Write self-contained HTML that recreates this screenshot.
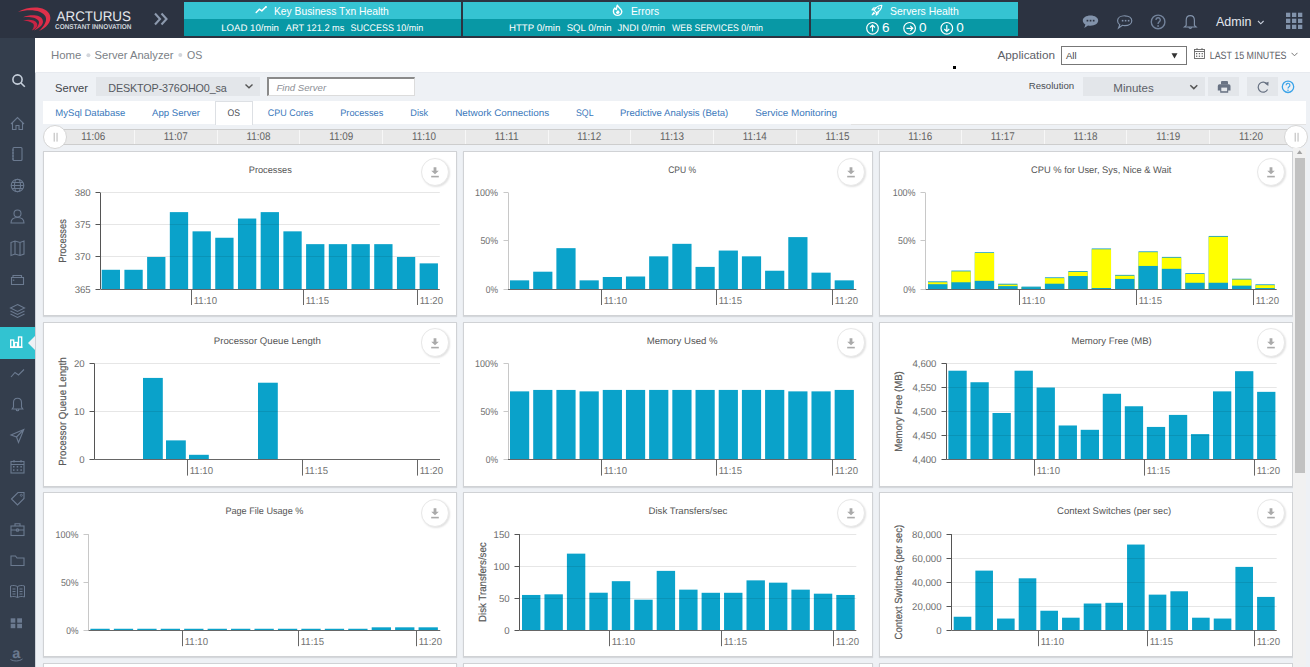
<!DOCTYPE html><html><head><meta charset="utf-8"><style>
*{box-sizing:border-box;margin:0;padding:0}
html,body{width:1310px;height:667px;overflow:hidden;background:#eef1f5;font-family:"Liberation Sans", sans-serif;}
.a{position:absolute;white-space:nowrap}
svg text{text-rendering:geometricPrecision}
</style></head><body><div class="a" style="left:0;top:0;width:1310px;height:38px;background:#2c3341"></div>
<svg class="a" style="left:14px;top:2px" width="40" height="32" viewBox="14 2 40 32">
<path d="M18 11.8 C 30 5.5, 47 6, 50 15.5 C 52 22, 46 28, 39 31 C 44 26, 47.5 21, 45.5 16.5 C 42 10, 30 8.8, 18 11.8 Z" fill="#e0304a"/>
<path d="M23 17.3 C 31 14, 40.5 15, 42.5 19.5 C 44.5 24, 40 28, 34 30.5 C 38 27, 40 23, 38.5 20.8 C 35.5 17, 29 16.8, 23 17.3 Z" fill="#d82a48"/>
<path d="M23 20.6 C 29 19, 35 20, 36.8 23 C 38.5 26, 36 28.5, 32 30.5 C 34 27.5, 34.5 25, 33 23.5 C 30.5 21.5, 26 21, 23 20.6 Z" fill="#c82444"/>
</svg>
<svg class="a" style="left:50px;top:0" width="130" height="38" viewBox="50 0 130 38"><text x="56.5" y="20.6" font-size="13.9" font-family="Liberation Sans" fill="#e6e9ee" textLength="74.5" lengthAdjust="spacingAndGlyphs">ARCTURUS</text><text x="55" y="29.3" font-size="7.1" font-weight="bold" font-family="Liberation Sans" fill="#cfd3da" textLength="76.5" lengthAdjust="spacingAndGlyphs">CONSTANT INNOVATION</text><path d="M155 13.5 L160 19 L155 24.5 M161.5 13.5 L166.5 19 L161.5 24.5" stroke="#8d9aae" stroke-width="2.1" fill="none"/></svg>
<div class="a" style="left:184px;top:2px;width:277px;height:17px;background:#35c3d2"></div>
<div class="a" style="left:184px;top:19px;width:277px;height:17px;background:#0898a5"></div>
<div class="a" style="left:274px;top:4.5px;font-size:10.3px;color:#fff;line-height:14px">Key Business Txn Health</div>
<svg class="a" style="left:255px;top:5px" width="13" height="9" viewBox="0 0 13 9"><path d="M1.2 7.4 L4.3 4.2 L6.8 5.9 L10.8 2" stroke="#fff" stroke-width="1.5" stroke-linecap="round" stroke-linejoin="round" fill="none"/><circle cx="11" cy="1.9" r="0.9" fill="#fff"/></svg>
<svg class="a" style="left:0;top:18px" width="1310" height="20" viewBox="0 18 1310 20"><text x="221.2" y="31.1" font-size="9.5" fill="#fff" font-family="Liberation Sans" textLength="57.7" lengthAdjust="spacingAndGlyphs">LOAD 10/min</text><text x="285.8" y="31.1" font-size="9.5" fill="#fff" font-family="Liberation Sans" textLength="58.6" lengthAdjust="spacingAndGlyphs">ART 121.2 ms</text><text x="350.6" y="31.1" font-size="9.5" fill="#fff" font-family="Liberation Sans" textLength="72.6" lengthAdjust="spacingAndGlyphs">SUCCESS 10/min</text></svg>
<div class="a" style="left:463px;top:2px;width:346px;height:17px;background:#35c3d2"></div>
<div class="a" style="left:463px;top:19px;width:346px;height:17px;background:#0898a5"></div>
<div class="a" style="left:631px;top:4.5px;font-size:10.3px;color:#fff;line-height:14px">Errors</div>
<svg class="a" style="left:608px;top:2px" width="20" height="16" viewBox="608 2 20 16"><path d="M617.3 5.2 C 617.6 7.2, 621.8 8.6, 621.8 11.2 A4.2 4.2 0 0 1 613.4 11.2 C 613.4 9.6, 614.2 8.6, 614.9 7.9 C 615.2 9.1, 615.8 9.5, 616.3 9.5 C 616.7 8.1, 616.7 6.5, 617.3 5.2 Z" stroke="#fff" stroke-width="1.4" fill="none" stroke-linejoin="round"/><path d="M617.9 9.8 C 618.4 11, 619.7 11.6, 619.6 12.6 A1.9 1.9 0 0 1 615.9 12.5 C 616.4 11.6, 617.6 11.2, 617.9 9.8 Z" fill="#fff"/></svg>
<svg class="a" style="left:0;top:18px" width="1310" height="20" viewBox="0 18 1310 20"><text x="509" y="31.1" font-size="9.5" fill="#fff" font-family="Liberation Sans" textLength="51.3" lengthAdjust="spacingAndGlyphs">HTTP 0/min</text><text x="566.7" y="31.1" font-size="9.5" fill="#fff" font-family="Liberation Sans" textLength="44.9" lengthAdjust="spacingAndGlyphs">SQL 0/min</text><text x="617.5" y="31.1" font-size="9.5" fill="#fff" font-family="Liberation Sans" textLength="47.5" lengthAdjust="spacingAndGlyphs">JNDI 0/min</text><text x="672" y="31.1" font-size="9.5" fill="#fff" font-family="Liberation Sans" textLength="90.9" lengthAdjust="spacingAndGlyphs">WEB SERVICES 0/min</text></svg>
<div class="a" style="left:811px;top:2px;width:207px;height:17px;background:#35c3d2"></div>
<div class="a" style="left:811px;top:19px;width:207px;height:17px;background:#0898a5"></div>
<div class="a" style="left:890px;top:4.5px;font-size:10.4px;color:#fff;line-height:14px">Servers Health</div>
<svg class="a" style="left:866px;top:2px" width="20" height="16" viewBox="866 2 20 16"><g stroke="#fff" stroke-width="1.15" fill="none" stroke-linejoin="round"><path d="M881.8 5.2 C 878 5.4, 875.6 7.6, 874.2 10.3 L876.7 12.8 C 879.4 11.4, 881.6 9, 881.8 5.2 Z"/><path d="M874.6 9.6 L871.9 10 L873.4 8.1 L876.2 7.7"/><path d="M876.5 12.4 L876.2 15 L878 13.5 L878.4 10.8"/><path d="M874 12.2 L872.2 14.8 L874.9 13.1"/></g><circle cx="878.6" cy="8.4" r="0.9" fill="#fff"/></svg>

<div class="a" style="left:882.0px;top:20px;font-size:13.5px;color:#fff;line-height:16px">6</div>
<div class="a" style="left:919.0px;top:20px;font-size:13.5px;color:#fff;line-height:16px">0</div>
<div class="a" style="left:956.3px;top:20px;font-size:13.5px;color:#fff;line-height:16px">0</div>
<svg class="a" style="left:860px;top:19px" width="100" height="18" viewBox="860 19 100 18">
<g stroke="#fff" stroke-width="1.2" fill="none">
<circle cx="872.5" cy="28.3" r="5.8"/><path d="M872.5 31.5 V25 M870 27.5 L872.5 25 L875 27.5"/>
<circle cx="909.6" cy="28.3" r="5.8"/><path d="M906.5 28.3 H912.8 M910.3 25.8 L912.8 28.3 L910.3 30.8"/>
<circle cx="946.8" cy="28.3" r="5.8"/><path d="M946.8 25 V31.5 M944.3 29 L946.8 31.5 L949.3 29"/>
</g></svg>
<svg class="a" style="left:1075px;top:8px" width="235" height="26" viewBox="1075 8 235 26">
<path d="M1090.5 15.4 C 1095 15.4, 1098.2 17.6, 1098.2 20.6 C 1098.2 23.6, 1095 25.8, 1090.5 25.8 C 1089.6 25.8, 1088.8 25.7, 1088 25.5 L 1084.3 27.9 L 1085.4 24.6 C 1083.8 23.7, 1082.8 22.2, 1082.8 20.6 C 1082.8 17.6, 1086 15.4, 1090.5 15.4 Z" fill="#8293ab"/>
<g fill="#2c3341"><rect x="1086.6" y="19.8" width="1.7" height="1.7"/><rect x="1089.7" y="19.8" width="1.7" height="1.7"/><rect x="1092.8" y="19.8" width="1.7" height="1.7"/></g>
<g fill="none" stroke="#8293ab" stroke-width="1.15">
<path d="M1124.7 15.8 C 1129 15.8, 1131.8 18, 1131.8 20.7 C 1131.8 23.4, 1129 25.6, 1124.7 25.6 C 1123.9 25.6, 1123.1 25.5, 1122.4 25.3 L 1118.6 28 L 1119.8 24.7 C 1118.3 23.8, 1117.6 22.3, 1117.6 20.7 C 1117.6 18, 1120.4 15.8, 1124.7 15.8 Z"/>
<circle cx="1158.1" cy="21.9" r="6.8" stroke-width="1.4" stroke="#73839b"/>
<path d="M1186.2 25.3 V20.2 C 1186.2 17.2, 1188 15.6, 1190.3 15.6 C 1192.6 15.6, 1194.4 17.2, 1194.4 20.2 V25.3 L 1196.2 27 H 1184.4 Z"/>
<path d="M1188.8 27.3 A1.6 1.6 0 0 0 1191.8 27.3"/>
</g>
<g fill="#8293ab"><rect x="1121.8" y="19.9" width="1.6" height="1.6"/><rect x="1124.8" y="19.9" width="1.6" height="1.6"/><rect x="1127.8" y="19.9" width="1.6" height="1.6"/></g>
<path d="M1155.9 19.9 A2.2 2.2 0 1 1 1159 22 C 1158.3 22.5, 1158.1 22.9, 1158.1 24" stroke="#73839b" stroke-width="1.4" fill="none"/><rect x="1157.3" y="25.2" width="1.6" height="1.6" fill="#73839b"/>
<path d="M1258 21 L1260.8 23.8 L1263.6 21" stroke="#c9d0dc" stroke-width="1.1" fill="none"/>
<g fill="#8293ab">
<rect x="1286" y="12.7" width="4.3" height="4.3"/><rect x="1292" y="12.7" width="4.3" height="4.3"/><rect x="1298" y="12.7" width="4.3" height="4.3"/>
<rect x="1286" y="18.7" width="4.3" height="4.3"/><rect x="1292" y="18.7" width="4.3" height="4.3"/><rect x="1298" y="18.7" width="4.3" height="4.3"/>
<rect x="1286" y="24.7" width="4.3" height="4.3"/><rect x="1292" y="24.7" width="4.3" height="4.3"/><rect x="1298" y="24.7" width="4.3" height="4.3"/>
</g>
</svg>
<div class="a" style="left:1216px;top:13.8px;font-size:12.5px;color:#e4e8ef;line-height:16px">Admin</div>
<div class="a" style="left:0;top:38px;width:35px;height:629px;background:#343e4d"></div>
<div class="a" style="left:0;top:327px;width:35px;height:32px;background:#32c3d1"></div>
<svg class="a" style="left:28px;top:336px" width="7" height="14" viewBox="0 0 7 14"><path d="M7 0 L0 7 L7 14 Z" fill="#eef1f5"/></svg>
<svg class="a" style="left:0;top:0" width="35" height="667" viewBox="0 0 35 667"><g stroke="#c6cfdb" stroke-width="1.6" fill="none"><circle cx="17.5" cy="79.5" r="4.6"/><path d="M21 83 L24.8 86.8"/></g><path d="M11 124 L17.5 117.5 L24 124 M12.5 122.5 V129.5 H16 V125.5 H19 V129.5 H22.5 V122.5" stroke="#6b7a90" stroke-width="1.1" fill="none"/><g stroke="#6b7a90" stroke-width="1.1" fill="none"><rect x="13" y="147.5" width="9" height="13" rx="1"/><path d="M12 150 H14 M12 153 H14 M12 156 H14 M12 159 H14"/></g><g stroke="#6b7a90" stroke-width="1.1" fill="none"><circle cx="17.5" cy="185.5" r="6.3"/><ellipse cx="17.5" cy="185.5" rx="3" ry="6.3"/><path d="M11.2 185.5 H23.8 M12 182.5 H23 M12 188.5 H23"/></g><g stroke="#6b7a90" stroke-width="1.1" fill="none"><circle cx="17.5" cy="213.5" r="3.5"/><path d="M11 223 C 11 218.5, 14 217.5, 17.5 217.5 C 21 217.5, 24 218.5, 24 223 Z"/></g><path d="M11 242.5 L15 241 L20 242.5 L24 241 V254 L20 255.5 L15 254 L11 255.5 Z M15 241 V254 M20 242.5 V255.5" stroke="#6b7a90" stroke-width="1.1" fill="none"/><path d="M11.5 277.5 H23.5 V284.5 H11.5 Z M13 277.5 V275.5 H21.5 V277.5" stroke="#6b7a90" stroke-width="1.1" fill="none"/><rect x="12.8" y="279.6" width="1.5" height="1.2" fill="#6b7a90"/><path d="M17.5 304.5 L24.5 308 L17.5 311.5 L10.5 308 Z M10.5 311 L17.5 314.5 L24.5 311 M10.5 314 L17.5 317.5 L24.5 314" stroke="#6b7a90" stroke-width="1.1" fill="none"/><g stroke="#fff" stroke-width="1.3" fill="none"><rect x="10.7" y="340" width="3" height="7"/><rect x="14.5" y="342.5" width="3" height="4.5"/><rect x="18.5" y="337" width="3.2" height="10"/><path d="M10 347.3 H22.5"/></g><path d="M11 377 L15 372.5 L18.5 375 L24 369.5" stroke="#6b7a90" stroke-width="1.1" fill="none"/><path d="M13.5 407 V402.5 C 13.5 399.5, 15.3 398.2, 17.5 398.2 C 19.7 398.2, 21.5 399.5, 21.5 402.5 V407 L22.8 409 H12.2 Z M16.2 409.5 A1.3 1.3 0 0 0 18.8 409.5" stroke="#6b7a90" stroke-width="1.1" fill="none"/><path d="M23.8 429.5 L11 435 L16.5 437 L18.5 442.5 Z M16.5 437 L23.8 429.5" stroke="#6b7a90" stroke-width="1.1" fill="none"/><g stroke="#6b7a90" stroke-width="1.1" fill="none"><rect x="11" y="461.5" width="13" height="11.5"/><path d="M11 464.5 H24 M14 460 V462.5 M21 460 V462.5"/></g><g fill="#6b7a90"><rect x="13" y="466" width="1.5" height="1.5"/><rect x="16.7" y="466" width="1.5" height="1.5"/><rect x="20.4" y="466" width="1.5" height="1.5"/><rect x="13" y="469.3" width="1.5" height="1.5"/><rect x="16.7" y="469.3" width="1.5" height="1.5"/><rect x="20.4" y="469.3" width="1.5" height="1.5"/></g><path d="M11.5 499 L18 492.5 H24 V498.5 L17.5 505 Z" stroke="#6b7a90" stroke-width="1.1" fill="none"/><circle cx="21.3" cy="495.3" r="1" stroke="#6b7a90" stroke-width="0.8" fill="none"/><g stroke="#6b7a90" stroke-width="1.1" fill="none"><rect x="11" y="526" width="13" height="9.5"/><path d="M15 526 V523.8 H20 V526 M11 530 H24"/><circle cx="17.5" cy="530" r="1.3"/></g><path d="M11 556 H15.5 L17 558 H24 V565.5 H11 Z" stroke="#6b7a90" stroke-width="1.1" fill="none"/><path d="M10.5 586 C 13 585, 15.5 585.5, 17.5 586.5 C 19.5 585.5, 22 585, 24.5 586 V597 C 22 596, 19.5 596.5, 17.5 597.5 C 15.5 596.5, 13 596, 10.5 597 Z M17.5 586.5 V597.5 M12.5 589 H15.5 M12.5 591.5 H15.5 M12.5 594 H15.5 M19.5 589 H22.5 M19.5 591.5 H22.5 M19.5 594 H22.5" stroke="#6b7a90" stroke-width="1" fill="none"/><g fill="#6b7a90"><rect x="10.7" y="618.3" width="4.6" height="4.4"/><rect x="17.2" y="618.3" width="4.8" height="4.4"/><rect x="10.7" y="623.8" width="4.6" height="4.4"/><rect x="17.2" y="623.8" width="4.8" height="4.4"/></g><text x="16.2" y="658" font-size="14.5" font-weight="bold" font-family="Liberation Sans" fill="#6b7a90" text-anchor="middle">a</text><path d="M10.5 659.5 C 14 661.5, 19 661.5, 22.5 659" stroke="#6b7a90" stroke-width="1" fill="none"/></svg>
<div class="a" style="left:35px;top:72px;width:1px;height:595px;background:#cdd2d9"></div>
<div class="a" style="left:35px;top:38px;width:1275px;height:34px;background:#fff"></div>
<div class="a" style="left:35px;top:72px;width:1275px;height:1px;background:#e7eaef"></div>
<div class="a" style="left:51px;top:47px;font-size:11.4px;color:#7b7f86;line-height:16px">Home</div>
<svg class="a" style="left:80px;top:48px" width="110" height="14" viewBox="80 48 110 14"><circle cx="88.4" cy="55.2" r="2" fill="#d3d6db"/><circle cx="180.3" cy="55.1" r="2" fill="#d3d6db"/></svg>
<div class="a" style="left:94.5px;top:47px;font-size:11.2px;color:#7b7f86;line-height:16px">Server Analyzer</div>
<div class="a" style="left:187px;top:47px;font-size:10.6px;color:#7b7f86;line-height:16px;letter-spacing:0.1px">OS</div>
<div class="a" style="left:953px;top:66px;width:3px;height:3px;background:#000"></div>
<div class="a" style="left:997.5px;top:47px;font-size:11.75px;color:#5d6067;line-height:16px">Application</div>
<div class="a" style="left:1061px;top:45.5px;width:126px;height:19.5px;border:1px solid #777;border-top-width:1.5px;background:#fff"></div>
<div class="a" style="left:1066px;top:50px;font-size:9.5px;color:#444;line-height:12px">All</div>
<svg class="a" style="left:1170px;top:52px" width="9" height="8" viewBox="0 0 9 8"><path d="M1.5 1.2 H7.5 L4.5 6.6 Z" fill="#333"/></svg>
<svg class="a" style="left:1194px;top:48px" width="11" height="11" viewBox="0 0 11 11"><g stroke="#666" stroke-width="0.9" fill="none"><rect x="0.5" y="1.5" width="10" height="9"/><path d="M0.5 3.5 H10.5 M3 0 V2 M8 0 V2"/></g><g fill="#666"><rect x="2" y="5" width="1.3" height="1.3"/><rect x="4.8" y="5" width="1.3" height="1.3"/><rect x="7.6" y="5" width="1.3" height="1.3"/><rect x="2" y="7.6" width="1.3" height="1.3"/><rect x="4.8" y="7.6" width="1.3" height="1.3"/><rect x="7.6" y="7.6" width="1.3" height="1.3"/></g></svg>
<svg class="a" style="left:1205px;top:44px" width="85" height="20" viewBox="1205 44 85 20"><text x="1209.7" y="59" font-size="10.6" fill="#5d6067" font-family="Liberation Sans" textLength="76.8" lengthAdjust="spacingAndGlyphs">LAST 15 MINUTES</text></svg>
<svg class="a" style="left:1291px;top:52px" width="7" height="5" viewBox="0 0 7 5"><path d="M0.5 0.8 L3.5 3.8 L6.5 0.8" stroke="#777" stroke-width="1" fill="none"/></svg>
<div class="a" style="left:55px;top:79.7px;font-size:11.2px;color:#43464c;line-height:16px">Server</div>
<div class="a" style="left:96px;top:77px;width:164px;height:19px;background:#e3e6ea"></div>
<div class="a" style="left:108.3px;top:80px;font-size:10.8px;color:#555960;line-height:16px;letter-spacing:-0.15px">DESKTOP-376OHO0_sa</div>
<svg class="a" style="left:244px;top:83px" width="10" height="7" viewBox="0 0 10 7"><path d="M1.5 1.5 L5 4.8 L8.5 1.5" stroke="#555" stroke-width="1.4" fill="none"/></svg>
<div class="a" style="left:267px;top:77px;width:148px;height:19px;background:#fff;border:1px solid #dcdcdc;border-top:2px solid #8a8a8a;border-left:2px solid #8a8a8a"></div>
<div class="a" style="left:276.5px;top:82px;font-size:9.6px;color:#8b8e94;font-style:italic;line-height:12px">Find Server</div>
<div class="a" style="left:1028.7px;top:79.6px;font-size:9.65px;color:#4a4d53;line-height:12px">Resolution</div>
<div class="a" style="left:1083px;top:77px;width:122px;height:19px;background:#e3e6ea"></div>
<div class="a" style="left:1113.3px;top:80.8px;font-size:11.55px;color:#5d6168;line-height:14px">Minutes</div>
<svg class="a" style="left:1189px;top:84px" width="10" height="7" viewBox="0 0 10 7"><path d="M1.3 1.3 L4.8 4.6 L8.3 1.3" stroke="#555" stroke-width="1.5" fill="none"/></svg>
<div class="a" style="left:1208px;top:77px;width:31px;height:19px;background:#e3e6ea"></div>
<div class="a" style="left:1247px;top:77px;width:31px;height:19px;background:#e3e6ea"></div>
<svg class="a" style="left:1208px;top:77px" width="90" height="20" viewBox="1208 77 90 20"><path d="M1222 81 H1227 A1 1 0 0 1 1228 82 V84.5 H1221 V82 A1 1 0 0 1 1222 81 Z" fill="#687283"/><path d="M1219.5 84.3 H1228.8 A1.7 1.7 0 0 1 1230.5 86 V90.5 H1228.2 V92.8 H1220.2 V90.5 H1217.8 V86 A1.7 1.7 0 0 1 1219.5 84.3 Z" fill="#687283"/><rect x="1221.3" y="87.6" width="5.8" height="3.6" fill="#e3e6ea"/><path d="M1267.2 84.2 A5 5 0 1 0 1267.6 89.5" stroke="#687283" stroke-width="1.25" fill="none"/><path d="M1264.5 83.2 L1268.6 81.8 L1268.3 86 Z" fill="#687283"/><circle cx="1288" cy="86.8" r="5.7" stroke="#3aa3e8" stroke-width="1.3" fill="none"/><path d="M1286.1 85.2 A1.9 1.9 0 1 1 1288.8 86.9 C 1288.2 87.3, 1288 87.6, 1288 88.6" stroke="#3aa3e8" stroke-width="1.2" fill="none"/><circle cx="1288" cy="90.3" r="0.75" fill="#3aa3e8"/></svg>
<div class="a" style="left:43px;top:101px;width:1263px;height:23px;background:#fff"></div>
<div class="a" style="left:215px;top:101px;width:38px;height:24px;background:#fff;border:1px solid #dde0e4;border-bottom:none"></div>
<svg class="a" style="left:0;top:100px" width="900" height="25" viewBox="0 100 900 25"><text x="55.3" y="116.3" font-size="9.5" fill="#3a78bb" font-family="Liberation Sans" textLength="70" lengthAdjust="spacingAndGlyphs">MySql Database</text><text x="152" y="116.3" font-size="9.5" fill="#3a78bb" font-family="Liberation Sans" textLength="48" lengthAdjust="spacingAndGlyphs">App Server</text><text x="227.6" y="116.3" font-size="9.5" fill="#4a4d53" font-family="Liberation Sans" textLength="12.5" lengthAdjust="spacingAndGlyphs">OS</text><text x="267.8" y="116.3" font-size="9.5" fill="#3a78bb" font-family="Liberation Sans" textLength="45.4" lengthAdjust="spacingAndGlyphs">CPU Cores</text><text x="340.2" y="116.3" font-size="9.5" fill="#3a78bb" font-family="Liberation Sans" textLength="43.1" lengthAdjust="spacingAndGlyphs">Processes</text><text x="410.3" y="116.3" font-size="9.5" fill="#3a78bb" font-family="Liberation Sans" textLength="17.8" lengthAdjust="spacingAndGlyphs">Disk</text><text x="455.2" y="116.3" font-size="9.5" fill="#3a78bb" font-family="Liberation Sans" textLength="94" lengthAdjust="spacingAndGlyphs">Network Connections</text><text x="576" y="116.3" font-size="9.5" fill="#3a78bb" font-family="Liberation Sans" textLength="17.6" lengthAdjust="spacingAndGlyphs">SQL</text><text x="620" y="116.3" font-size="9.5" fill="#3a78bb" font-family="Liberation Sans" textLength="108.3" lengthAdjust="spacingAndGlyphs">Predictive Analysis (Beta)</text><text x="755.2" y="116.3" font-size="9.5" fill="#3a78bb" font-family="Liberation Sans" textLength="81.9" lengthAdjust="spacingAndGlyphs">Service Monitoring</text></svg>
<div class="a" style="left:851px;top:124px;width:455px;height:1px;background:#e3e3e3"></div>
<div class="a" style="left:55px;top:129px;width:1241px;height:16px;background:#e9e9e9;border-top:1px solid #cdcdcd;border-bottom:1px solid #cdcdcd"></div>
<div class="a" style="left:134px;top:130px;width:1px;height:14px;background:#f7f7f7"></div>
<div class="a" style="left:217px;top:130px;width:1px;height:14px;background:#f7f7f7"></div>
<div class="a" style="left:299px;top:130px;width:1px;height:14px;background:#f7f7f7"></div>
<div class="a" style="left:382px;top:130px;width:1px;height:14px;background:#f7f7f7"></div>
<div class="a" style="left:465px;top:130px;width:1px;height:14px;background:#f7f7f7"></div>
<div class="a" style="left:548px;top:130px;width:1px;height:14px;background:#f7f7f7"></div>
<div class="a" style="left:630px;top:130px;width:1px;height:14px;background:#f7f7f7"></div>
<div class="a" style="left:713px;top:130px;width:1px;height:14px;background:#f7f7f7"></div>
<div class="a" style="left:796px;top:130px;width:1px;height:14px;background:#f7f7f7"></div>
<div class="a" style="left:878px;top:130px;width:1px;height:14px;background:#f7f7f7"></div>
<div class="a" style="left:961px;top:130px;width:1px;height:14px;background:#f7f7f7"></div>
<div class="a" style="left:1044px;top:130px;width:1px;height:14px;background:#f7f7f7"></div>
<div class="a" style="left:1126px;top:130px;width:1px;height:14px;background:#f7f7f7"></div>
<div class="a" style="left:1209px;top:130px;width:1px;height:14px;background:#f7f7f7"></div>
<svg class="a" style="left:0;top:0" width="1310" height="160" viewBox="0 0 1310 160"><text x="93.15" y="140.4" text-anchor="middle" font-size="11.2" fill="#636363" font-family="Liberation Sans" textLength="24" lengthAdjust="spacingAndGlyphs">11:06</text><text x="175.85" y="140.4" text-anchor="middle" font-size="11.2" fill="#636363" font-family="Liberation Sans" textLength="24" lengthAdjust="spacingAndGlyphs">11:07</text><text x="258.55" y="140.4" text-anchor="middle" font-size="11.2" fill="#636363" font-family="Liberation Sans" textLength="24" lengthAdjust="spacingAndGlyphs">11:08</text><text x="341.25" y="140.4" text-anchor="middle" font-size="11.2" fill="#636363" font-family="Liberation Sans" textLength="24" lengthAdjust="spacingAndGlyphs">11:09</text><text x="423.95" y="140.4" text-anchor="middle" font-size="11.2" fill="#636363" font-family="Liberation Sans" textLength="24" lengthAdjust="spacingAndGlyphs">11:10</text><text x="506.65" y="140.4" text-anchor="middle" font-size="11.2" fill="#636363" font-family="Liberation Sans" textLength="24" lengthAdjust="spacingAndGlyphs">11:11</text><text x="589.35" y="140.4" text-anchor="middle" font-size="11.2" fill="#636363" font-family="Liberation Sans" textLength="24" lengthAdjust="spacingAndGlyphs">11:12</text><text x="672.05" y="140.4" text-anchor="middle" font-size="11.2" fill="#636363" font-family="Liberation Sans" textLength="24" lengthAdjust="spacingAndGlyphs">11:13</text><text x="754.75" y="140.4" text-anchor="middle" font-size="11.2" fill="#636363" font-family="Liberation Sans" textLength="24" lengthAdjust="spacingAndGlyphs">11:14</text><text x="837.45" y="140.4" text-anchor="middle" font-size="11.2" fill="#636363" font-family="Liberation Sans" textLength="24" lengthAdjust="spacingAndGlyphs">11:15</text><text x="920.15" y="140.4" text-anchor="middle" font-size="11.2" fill="#636363" font-family="Liberation Sans" textLength="24" lengthAdjust="spacingAndGlyphs">11:16</text><text x="1002.85" y="140.4" text-anchor="middle" font-size="11.2" fill="#636363" font-family="Liberation Sans" textLength="24" lengthAdjust="spacingAndGlyphs">11:17</text><text x="1085.55" y="140.4" text-anchor="middle" font-size="11.2" fill="#636363" font-family="Liberation Sans" textLength="24" lengthAdjust="spacingAndGlyphs">11:18</text><text x="1168.25" y="140.4" text-anchor="middle" font-size="11.2" fill="#636363" font-family="Liberation Sans" textLength="24" lengthAdjust="spacingAndGlyphs">11:19</text><text x="1250.95" y="140.4" text-anchor="middle" font-size="11.2" fill="#636363" font-family="Liberation Sans" textLength="24" lengthAdjust="spacingAndGlyphs">11:20</text></svg>
<div class="a" style="left:42.7px;top:125.1px;width:24px;height:24px;border-radius:50%;background:#fff;border:1px solid #d5d5d5"></div>
<svg class="a" style="left:49.6px;top:130px" width="10" height="14" viewBox="0 0 10 14"><rect x="3.6" y="2.8" width="1.3" height="8.8" fill="#c8c8c8"/><rect x="6.4" y="2.8" width="1.3" height="8.8" fill="#c8c8c8"/></svg>
<div class="a" style="left:1283.9px;top:125.1px;width:24px;height:24px;border-radius:50%;background:#fff;border:1px solid #d5d5d5"></div>
<svg class="a" style="left:1290.8px;top:130px" width="10" height="14" viewBox="0 0 10 14"><rect x="3.6" y="2.8" width="1.3" height="8.8" fill="#c8c8c8"/><rect x="6.4" y="2.8" width="1.3" height="8.8" fill="#c8c8c8"/></svg>
<div class="a" style="left:1293px;top:148px;width:13.3px;height:519px;background:#f1f1f1"></div>
<svg class="a" style="left:1296px;top:148px" width="9" height="7" viewBox="0 0 9 7"><path d="M0.9 5.9 L3.6 2.2 L6.4 5.9 Z" fill="#a3a3a3"/></svg>
<div class="a" style="left:1294.5px;top:158px;width:10.2px;height:315px;background:#c1c1c1"></div>
<div class="a" style="left:43px;top:151.0px;width:414px;height:165px;background:#fff;border:1px solid #d0d2d5;box-shadow:0 1px 1px rgba(0,0,0,0.10)"></div>
<svg class="a" style="left:0;top:0" width="1310" height="667" viewBox="0 0 1310 667"><line x1="100.7" y1="256.5" x2="439.8" y2="256.5" stroke="#e6e6e6" stroke-width="1"/><line x1="100.7" y1="224.5" x2="439.8" y2="224.5" stroke="#e6e6e6" stroke-width="1"/><line x1="100.7" y1="192.5" x2="439.8" y2="192.5" stroke="#e6e6e6" stroke-width="1"/><rect x="101.70" y="269.78" width="18.3" height="19.22" fill="#0aa2ca"/><rect x="124.41" y="269.78" width="18.3" height="19.22" fill="#0aa2ca"/><rect x="147.12" y="256.97" width="18.3" height="32.03" fill="#0aa2ca"/><rect x="169.83" y="212.12" width="18.3" height="76.88" fill="#0aa2ca"/><rect x="192.54" y="231.34" width="18.3" height="57.66" fill="#0aa2ca"/><rect x="215.25" y="237.75" width="18.3" height="51.25" fill="#0aa2ca"/><rect x="237.96" y="218.53" width="18.3" height="70.47" fill="#0aa2ca"/><rect x="260.67" y="212.12" width="18.3" height="76.88" fill="#0aa2ca"/><rect x="283.38" y="231.34" width="18.3" height="57.66" fill="#0aa2ca"/><rect x="306.09" y="244.15" width="18.3" height="44.85" fill="#0aa2ca"/><rect x="328.80" y="244.15" width="18.3" height="44.85" fill="#0aa2ca"/><rect x="351.51" y="244.15" width="18.3" height="44.85" fill="#0aa2ca"/><rect x="374.22" y="244.15" width="18.3" height="44.85" fill="#0aa2ca"/><rect x="396.93" y="256.97" width="18.3" height="32.03" fill="#0aa2ca"/><rect x="419.64" y="263.37" width="18.3" height="25.63" fill="#0aa2ca"/><line x1="169.83" y1="256.5" x2="188.13" y2="256.5" stroke="#000" stroke-opacity="0.09" stroke-width="1"/><line x1="192.54" y1="256.5" x2="210.84" y2="256.5" stroke="#000" stroke-opacity="0.09" stroke-width="1"/><line x1="215.25" y1="256.5" x2="233.55" y2="256.5" stroke="#000" stroke-opacity="0.09" stroke-width="1"/><line x1="237.96" y1="256.5" x2="256.26" y2="256.5" stroke="#000" stroke-opacity="0.09" stroke-width="1"/><line x1="260.67" y1="256.5" x2="278.97" y2="256.5" stroke="#000" stroke-opacity="0.09" stroke-width="1"/><line x1="283.38" y1="256.5" x2="301.68" y2="256.5" stroke="#000" stroke-opacity="0.09" stroke-width="1"/><line x1="306.09" y1="256.5" x2="324.39" y2="256.5" stroke="#000" stroke-opacity="0.09" stroke-width="1"/><line x1="328.80" y1="256.5" x2="347.10" y2="256.5" stroke="#000" stroke-opacity="0.09" stroke-width="1"/><line x1="351.51" y1="256.5" x2="369.81" y2="256.5" stroke="#000" stroke-opacity="0.09" stroke-width="1"/><line x1="374.22" y1="256.5" x2="392.52" y2="256.5" stroke="#000" stroke-opacity="0.09" stroke-width="1"/><line x1="169.83" y1="224.5" x2="188.13" y2="224.5" stroke="#000" stroke-opacity="0.09" stroke-width="1"/><line x1="237.96" y1="224.5" x2="256.26" y2="224.5" stroke="#000" stroke-opacity="0.09" stroke-width="1"/><line x1="260.67" y1="224.5" x2="278.97" y2="224.5" stroke="#000" stroke-opacity="0.09" stroke-width="1"/><line x1="100.5" y1="192.90" x2="100.5" y2="289.00" stroke="#555" stroke-width="1"/><line x1="95.5" y1="289.5" x2="100.5" y2="289.5" stroke="#555" stroke-width="1"/><text x="74.65" y="292.50" font-size="9.8" fill="#6e6e6e" font-family="Liberation Sans" textLength="16.05" lengthAdjust="spacingAndGlyphs">365</text><line x1="95.5" y1="256.5" x2="100.5" y2="256.5" stroke="#555" stroke-width="1"/><text x="74.65" y="260.47" font-size="9.8" fill="#6e6e6e" font-family="Liberation Sans" textLength="16.05" lengthAdjust="spacingAndGlyphs">370</text><line x1="95.5" y1="224.5" x2="100.5" y2="224.5" stroke="#555" stroke-width="1"/><text x="74.65" y="228.43" font-size="9.8" fill="#6e6e6e" font-family="Liberation Sans" textLength="16.05" lengthAdjust="spacingAndGlyphs">375</text><line x1="95.5" y1="192.5" x2="100.5" y2="192.5" stroke="#555" stroke-width="1"/><text x="74.65" y="196.40" font-size="9.8" fill="#6e6e6e" font-family="Liberation Sans" textLength="16.05" lengthAdjust="spacingAndGlyphs">380</text><line x1="100.70" y1="289.5" x2="439.80" y2="289.5" stroke="#666" stroke-width="1"/><line x1="191.5" y1="289.00" x2="191.5" y2="305.00" stroke="#666" stroke-width="1"/><text x="193.70" y="303.60" font-size="10.1" fill="#737373" font-family="Liberation Sans" textLength="23.3" lengthAdjust="spacingAndGlyphs">11:10</text><line x1="303.5" y1="289.00" x2="303.5" y2="305.00" stroke="#666" stroke-width="1"/><text x="305.70" y="303.60" font-size="10.1" fill="#737373" font-family="Liberation Sans" textLength="23.3" lengthAdjust="spacingAndGlyphs">11:15</text><line x1="417.5" y1="289.00" x2="417.5" y2="305.00" stroke="#666" stroke-width="1"/><text x="419.70" y="303.60" font-size="10.1" fill="#737373" font-family="Liberation Sans" textLength="23.3" lengthAdjust="spacingAndGlyphs">11:20</text><text x="270.25" y="173.00" text-anchor="middle" font-size="9.5" fill="#555" font-family="Liberation Sans" textLength="43" lengthAdjust="spacingAndGlyphs">Processes</text><text x="66.00" y="240.95" text-anchor="middle" font-size="10.4" fill="#5a5a5a" stroke="#5a5a5a" stroke-width="0.2" font-family="Liberation Sans" transform="rotate(-90 66.00 240.95)" textLength="43.5" lengthAdjust="spacingAndGlyphs">Processes</text></svg>
<div class="a" style="left:420.9px;top:157.8px;width:28.4px;height:28.4px;border-radius:50%;background:#fff;border:1px solid #e8e8e8;box-shadow:1px 1px 2px rgba(0,0,0,0.12)"></div>
<svg class="a" style="left:428.5px;top:166.0px" width="12" height="12" viewBox="0 0 12 12"><path d="M4.6 1.2 H7.4 V4.8 H9.8 L6 8.2 L2.2 4.8 H4.6 Z" fill="#aaa"/><rect x="2.2" y="9.8" width="7.6" height="1.6" fill="#aaa"/></svg>
<div class="a" style="left:463px;top:151.0px;width:410px;height:165px;background:#fff;border:1px solid #d0d2d5;box-shadow:0 1px 1px rgba(0,0,0,0.10)"></div>
<svg class="a" style="left:0;top:0" width="1310" height="667" viewBox="0 0 1310 667"><rect x="510.00" y="280.35" width="19.2" height="8.65" fill="#0aa2ca"/><rect x="533.19" y="271.70" width="19.2" height="17.30" fill="#0aa2ca"/><rect x="556.38" y="248.16" width="19.2" height="40.84" fill="#0aa2ca"/><rect x="579.57" y="280.35" width="19.2" height="8.65" fill="#0aa2ca"/><rect x="602.76" y="276.99" width="19.2" height="12.01" fill="#0aa2ca"/><rect x="625.95" y="276.51" width="19.2" height="12.49" fill="#0aa2ca"/><rect x="649.14" y="256.33" width="19.2" height="32.67" fill="#0aa2ca"/><rect x="672.33" y="243.83" width="19.2" height="45.17" fill="#0aa2ca"/><rect x="695.52" y="266.90" width="19.2" height="22.10" fill="#0aa2ca"/><rect x="718.71" y="250.56" width="19.2" height="38.44" fill="#0aa2ca"/><rect x="741.90" y="256.33" width="19.2" height="32.67" fill="#0aa2ca"/><rect x="765.09" y="270.74" width="19.2" height="18.26" fill="#0aa2ca"/><rect x="788.28" y="237.11" width="19.2" height="51.89" fill="#0aa2ca"/><rect x="811.47" y="272.66" width="19.2" height="16.34" fill="#0aa2ca"/><rect x="834.66" y="280.35" width="19.2" height="8.65" fill="#0aa2ca"/><line x1="508.5" y1="192.90" x2="508.5" y2="289.00" stroke="#c8c8c8" stroke-width="1"/><line x1="503.5" y1="289.5" x2="508.5" y2="289.5" stroke="#c8c8c8" stroke-width="1"/><text x="485.75" y="292.50" font-size="9.8" fill="#6e6e6e" font-family="Liberation Sans" textLength="12.25" lengthAdjust="spacingAndGlyphs">0%</text><line x1="503.5" y1="240.5" x2="508.5" y2="240.5" stroke="#c8c8c8" stroke-width="1"/><text x="480.40" y="244.45" font-size="9.8" fill="#6e6e6e" font-family="Liberation Sans" textLength="17.60" lengthAdjust="spacingAndGlyphs">50%</text><line x1="503.5" y1="192.5" x2="508.5" y2="192.5" stroke="#c8c8c8" stroke-width="1"/><text x="475.05" y="196.40" font-size="9.8" fill="#6e6e6e" font-family="Liberation Sans" textLength="22.95" lengthAdjust="spacingAndGlyphs">100%</text><line x1="508.00" y1="289.5" x2="856.30" y2="289.5" stroke="#666" stroke-width="1"/><line x1="601.5" y1="289.00" x2="601.5" y2="305.00" stroke="#666" stroke-width="1"/><text x="603.70" y="303.60" font-size="10.1" fill="#737373" font-family="Liberation Sans" textLength="23.3" lengthAdjust="spacingAndGlyphs">11:10</text><line x1="716.5" y1="289.00" x2="716.5" y2="305.00" stroke="#666" stroke-width="1"/><text x="718.70" y="303.60" font-size="10.1" fill="#737373" font-family="Liberation Sans" textLength="23.3" lengthAdjust="spacingAndGlyphs">11:15</text><line x1="832.5" y1="289.00" x2="832.5" y2="305.00" stroke="#666" stroke-width="1"/><text x="834.70" y="303.60" font-size="10.1" fill="#737373" font-family="Liberation Sans" textLength="23.3" lengthAdjust="spacingAndGlyphs">11:20</text><text x="682.15" y="173.00" text-anchor="middle" font-size="9.5" fill="#555" font-family="Liberation Sans" textLength="28" lengthAdjust="spacingAndGlyphs">CPU %</text></svg>
<div class="a" style="left:836.9px;top:157.8px;width:28.4px;height:28.4px;border-radius:50%;background:#fff;border:1px solid #e8e8e8;box-shadow:1px 1px 2px rgba(0,0,0,0.12)"></div>
<svg class="a" style="left:844.5px;top:166.0px" width="12" height="12" viewBox="0 0 12 12"><path d="M4.6 1.2 H7.4 V4.8 H9.8 L6 8.2 L2.2 4.8 H4.6 Z" fill="#aaa"/><rect x="2.2" y="9.8" width="7.6" height="1.6" fill="#aaa"/></svg>
<div class="a" style="left:879px;top:151.0px;width:414px;height:165px;background:#fff;border:1px solid #d0d2d5;box-shadow:0 1px 1px rgba(0,0,0,0.10)"></div>
<svg class="a" style="left:0;top:0" width="1310" height="667" viewBox="0 0 1310 667"><rect x="928.00" y="281.31" width="19.3" height="7.69" fill="#1b9fc9"/><rect x="928.00" y="282.27" width="19.3" height="6.73" fill="#ffff00"/><rect x="928.00" y="284.19" width="19.3" height="4.81" fill="#0aa2ca"/><rect x="951.39" y="270.55" width="19.3" height="18.45" fill="#1b9fc9"/><rect x="951.39" y="271.41" width="19.3" height="17.59" fill="#ffff00"/><rect x="951.39" y="282.27" width="19.3" height="6.73" fill="#0aa2ca"/><rect x="974.78" y="252.19" width="19.3" height="36.81" fill="#1b9fc9"/><rect x="974.78" y="252.96" width="19.3" height="36.04" fill="#ffff00"/><rect x="974.78" y="280.83" width="19.3" height="8.17" fill="#0aa2ca"/><rect x="998.17" y="283.71" width="19.3" height="5.29" fill="#1b9fc9"/><rect x="998.17" y="284.68" width="19.3" height="4.32" fill="#ffff00"/><rect x="998.17" y="286.12" width="19.3" height="2.88" fill="#0aa2ca"/><rect x="1021.56" y="286.60" width="19.3" height="2.40" fill="#1b9fc9"/><rect x="1021.56" y="287.08" width="19.3" height="1.92" fill="#ffff00"/><rect x="1021.56" y="287.08" width="19.3" height="1.92" fill="#0aa2ca"/><rect x="1044.95" y="277.28" width="19.3" height="11.72" fill="#1b9fc9"/><rect x="1044.95" y="278.14" width="19.3" height="10.86" fill="#ffff00"/><rect x="1044.95" y="283.71" width="19.3" height="5.29" fill="#0aa2ca"/><rect x="1068.34" y="271.03" width="19.3" height="17.97" fill="#1b9fc9"/><rect x="1068.34" y="271.89" width="19.3" height="17.11" fill="#ffff00"/><rect x="1068.34" y="276.03" width="19.3" height="12.97" fill="#0aa2ca"/><rect x="1091.73" y="248.45" width="19.3" height="40.55" fill="#1b9fc9"/><rect x="1091.73" y="249.31" width="19.3" height="39.69" fill="#ffff00"/><rect x="1091.73" y="288.04" width="19.3" height="0.96" fill="#0aa2ca"/><rect x="1115.12" y="274.87" width="19.3" height="14.13" fill="#1b9fc9"/><rect x="1115.12" y="275.74" width="19.3" height="13.26" fill="#ffff00"/><rect x="1115.12" y="278.91" width="19.3" height="10.09" fill="#0aa2ca"/><rect x="1138.51" y="251.33" width="19.3" height="37.67" fill="#1b9fc9"/><rect x="1138.51" y="252.19" width="19.3" height="36.81" fill="#ffff00"/><rect x="1138.51" y="265.94" width="19.3" height="23.06" fill="#0aa2ca"/><rect x="1161.90" y="256.90" width="19.3" height="32.10" fill="#1b9fc9"/><rect x="1161.90" y="257.77" width="19.3" height="31.23" fill="#ffff00"/><rect x="1161.90" y="268.82" width="19.3" height="20.18" fill="#0aa2ca"/><rect x="1185.29" y="273.14" width="19.3" height="15.86" fill="#1b9fc9"/><rect x="1185.29" y="274.01" width="19.3" height="14.99" fill="#ffff00"/><rect x="1185.29" y="282.75" width="19.3" height="6.25" fill="#0aa2ca"/><rect x="1208.68" y="235.95" width="19.3" height="53.05" fill="#1b9fc9"/><rect x="1208.68" y="236.82" width="19.3" height="52.18" fill="#ffff00"/><rect x="1208.68" y="282.75" width="19.3" height="6.25" fill="#0aa2ca"/><rect x="1232.07" y="278.72" width="19.3" height="10.28" fill="#1b9fc9"/><rect x="1232.07" y="279.58" width="19.3" height="9.42" fill="#ffff00"/><rect x="1232.07" y="285.64" width="19.3" height="3.36" fill="#0aa2ca"/><rect x="1255.46" y="284.29" width="19.3" height="4.71" fill="#1b9fc9"/><rect x="1255.46" y="285.16" width="19.3" height="3.84" fill="#ffff00"/><rect x="1255.46" y="288.04" width="19.3" height="0.96" fill="#0aa2ca"/><line x1="925.5" y1="192.90" x2="925.5" y2="289.00" stroke="#c8c8c8" stroke-width="1"/><line x1="920.5" y1="289.5" x2="925.5" y2="289.5" stroke="#c8c8c8" stroke-width="1"/><text x="903.35" y="292.50" font-size="9.8" fill="#6e6e6e" font-family="Liberation Sans" textLength="12.25" lengthAdjust="spacingAndGlyphs">0%</text><line x1="920.5" y1="240.5" x2="925.5" y2="240.5" stroke="#c8c8c8" stroke-width="1"/><text x="898.00" y="244.45" font-size="9.8" fill="#6e6e6e" font-family="Liberation Sans" textLength="17.60" lengthAdjust="spacingAndGlyphs">50%</text><line x1="920.5" y1="192.5" x2="925.5" y2="192.5" stroke="#c8c8c8" stroke-width="1"/><text x="892.65" y="196.40" font-size="9.8" fill="#6e6e6e" font-family="Liberation Sans" textLength="22.95" lengthAdjust="spacingAndGlyphs">100%</text><line x1="925.60" y1="289.5" x2="1276.70" y2="289.5" stroke="#666" stroke-width="1"/><line x1="1019.5" y1="289.00" x2="1019.5" y2="305.00" stroke="#666" stroke-width="1"/><text x="1021.70" y="303.60" font-size="10.1" fill="#737373" font-family="Liberation Sans" textLength="23.3" lengthAdjust="spacingAndGlyphs">11:10</text><line x1="1136.5" y1="289.00" x2="1136.5" y2="305.00" stroke="#666" stroke-width="1"/><text x="1138.70" y="303.60" font-size="10.1" fill="#737373" font-family="Liberation Sans" textLength="23.3" lengthAdjust="spacingAndGlyphs">11:15</text><line x1="1253.5" y1="289.00" x2="1253.5" y2="305.00" stroke="#666" stroke-width="1"/><text x="1255.70" y="303.60" font-size="10.1" fill="#737373" font-family="Liberation Sans" textLength="23.3" lengthAdjust="spacingAndGlyphs">11:20</text><text x="1101.15" y="173.00" text-anchor="middle" font-size="9.5" fill="#555" font-family="Liberation Sans" textLength="140.5" lengthAdjust="spacingAndGlyphs">CPU % for User, Sys, Nice &amp; Wait</text></svg>
<div class="a" style="left:1256.9px;top:157.8px;width:28.4px;height:28.4px;border-radius:50%;background:#fff;border:1px solid #e8e8e8;box-shadow:1px 1px 2px rgba(0,0,0,0.12)"></div>
<svg class="a" style="left:1264.5px;top:166.0px" width="12" height="12" viewBox="0 0 12 12"><path d="M4.6 1.2 H7.4 V4.8 H9.8 L6 8.2 L2.2 4.8 H4.6 Z" fill="#aaa"/><rect x="2.2" y="9.8" width="7.6" height="1.6" fill="#aaa"/></svg>
<div class="a" style="left:43px;top:321.6px;width:414px;height:165px;background:#fff;border:1px solid #d0d2d5;box-shadow:0 1px 1px rgba(0,0,0,0.10)"></div>
<svg class="a" style="left:0;top:0" width="1310" height="667" viewBox="0 0 1310 667"><line x1="94.7" y1="411.5" x2="440" y2="411.5" stroke="#e6e6e6" stroke-width="1"/><line x1="94.7" y1="363.5" x2="440" y2="363.5" stroke="#e6e6e6" stroke-width="1"/><rect x="143.00" y="377.92" width="19.8" height="81.69" fill="#0aa2ca"/><rect x="166.00" y="440.38" width="19.8" height="19.22" fill="#0aa2ca"/><rect x="189.00" y="454.80" width="19.8" height="4.81" fill="#0aa2ca"/><rect x="258.00" y="382.72" width="19.8" height="76.88" fill="#0aa2ca"/><line x1="143.00" y1="411.5" x2="162.80" y2="411.5" stroke="#000" stroke-opacity="0.09" stroke-width="1"/><line x1="258.00" y1="411.5" x2="277.80" y2="411.5" stroke="#000" stroke-opacity="0.09" stroke-width="1"/><line x1="94.5" y1="363.50" x2="94.5" y2="459.60" stroke="#555" stroke-width="1"/><line x1="89.5" y1="459.5" x2="94.5" y2="459.5" stroke="#555" stroke-width="1"/><text x="79.35" y="463.10" font-size="9.8" fill="#6e6e6e" font-family="Liberation Sans" textLength="5.35" lengthAdjust="spacingAndGlyphs">0</text><line x1="89.5" y1="411.5" x2="94.5" y2="411.5" stroke="#555" stroke-width="1"/><text x="74.00" y="415.05" font-size="9.8" fill="#6e6e6e" font-family="Liberation Sans" textLength="10.70" lengthAdjust="spacingAndGlyphs">10</text><line x1="89.5" y1="363.5" x2="94.5" y2="363.5" stroke="#555" stroke-width="1"/><text x="74.00" y="367.00" font-size="9.8" fill="#6e6e6e" font-family="Liberation Sans" textLength="10.70" lengthAdjust="spacingAndGlyphs">20</text><line x1="94.70" y1="459.5" x2="440.00" y2="459.5" stroke="#666" stroke-width="1"/><line x1="187.5" y1="459.60" x2="187.5" y2="475.60" stroke="#666" stroke-width="1"/><text x="189.70" y="474.20" font-size="10.1" fill="#737373" font-family="Liberation Sans" textLength="23.3" lengthAdjust="spacingAndGlyphs">11:10</text><line x1="302.5" y1="459.60" x2="302.5" y2="475.60" stroke="#666" stroke-width="1"/><text x="304.70" y="474.20" font-size="10.1" fill="#737373" font-family="Liberation Sans" textLength="23.3" lengthAdjust="spacingAndGlyphs">11:15</text><line x1="417.5" y1="459.60" x2="417.5" y2="475.60" stroke="#666" stroke-width="1"/><text x="419.70" y="474.20" font-size="10.1" fill="#737373" font-family="Liberation Sans" textLength="23.3" lengthAdjust="spacingAndGlyphs">11:20</text><text x="267.35" y="343.60" text-anchor="middle" font-size="9.5" fill="#555" font-family="Liberation Sans" textLength="107" lengthAdjust="spacingAndGlyphs">Processor Queue Length</text><text x="66.00" y="411.55" text-anchor="middle" font-size="10.4" fill="#5a5a5a" stroke="#5a5a5a" stroke-width="0.2" font-family="Liberation Sans" transform="rotate(-90 66.00 411.55)" textLength="108.3" lengthAdjust="spacingAndGlyphs">Processor Queue Length</text></svg>
<div class="a" style="left:420.9px;top:328.4px;width:28.4px;height:28.4px;border-radius:50%;background:#fff;border:1px solid #e8e8e8;box-shadow:1px 1px 2px rgba(0,0,0,0.12)"></div>
<svg class="a" style="left:428.5px;top:336.6px" width="12" height="12" viewBox="0 0 12 12"><path d="M4.6 1.2 H7.4 V4.8 H9.8 L6 8.2 L2.2 4.8 H4.6 Z" fill="#aaa"/><rect x="2.2" y="9.8" width="7.6" height="1.6" fill="#aaa"/></svg>
<div class="a" style="left:463px;top:321.6px;width:410px;height:165px;background:#fff;border:1px solid #d0d2d5;box-shadow:0 1px 1px rgba(0,0,0,0.10)"></div>
<svg class="a" style="left:0;top:0" width="1310" height="667" viewBox="0 0 1310 667"><rect x="510.00" y="391.37" width="19.2" height="68.23" fill="#0aa2ca"/><rect x="533.19" y="389.93" width="19.2" height="69.67" fill="#0aa2ca"/><rect x="556.38" y="389.93" width="19.2" height="69.67" fill="#0aa2ca"/><rect x="579.57" y="391.37" width="19.2" height="68.23" fill="#0aa2ca"/><rect x="602.76" y="389.93" width="19.2" height="69.67" fill="#0aa2ca"/><rect x="625.95" y="389.93" width="19.2" height="69.67" fill="#0aa2ca"/><rect x="649.14" y="389.93" width="19.2" height="69.67" fill="#0aa2ca"/><rect x="672.33" y="389.93" width="19.2" height="69.67" fill="#0aa2ca"/><rect x="695.52" y="389.93" width="19.2" height="69.67" fill="#0aa2ca"/><rect x="718.71" y="389.93" width="19.2" height="69.67" fill="#0aa2ca"/><rect x="741.90" y="389.93" width="19.2" height="69.67" fill="#0aa2ca"/><rect x="765.09" y="389.93" width="19.2" height="69.67" fill="#0aa2ca"/><rect x="788.28" y="391.37" width="19.2" height="68.23" fill="#0aa2ca"/><rect x="811.47" y="391.37" width="19.2" height="68.23" fill="#0aa2ca"/><rect x="834.66" y="389.93" width="19.2" height="69.67" fill="#0aa2ca"/><line x1="508.5" y1="363.50" x2="508.5" y2="459.60" stroke="#c8c8c8" stroke-width="1"/><line x1="503.5" y1="459.5" x2="508.5" y2="459.5" stroke="#c8c8c8" stroke-width="1"/><text x="485.75" y="463.10" font-size="9.8" fill="#6e6e6e" font-family="Liberation Sans" textLength="12.25" lengthAdjust="spacingAndGlyphs">0%</text><line x1="503.5" y1="411.5" x2="508.5" y2="411.5" stroke="#c8c8c8" stroke-width="1"/><text x="480.40" y="415.05" font-size="9.8" fill="#6e6e6e" font-family="Liberation Sans" textLength="17.60" lengthAdjust="spacingAndGlyphs">50%</text><line x1="503.5" y1="363.5" x2="508.5" y2="363.5" stroke="#c8c8c8" stroke-width="1"/><text x="475.05" y="367.00" font-size="9.8" fill="#6e6e6e" font-family="Liberation Sans" textLength="22.95" lengthAdjust="spacingAndGlyphs">100%</text><line x1="508.00" y1="459.5" x2="856.30" y2="459.5" stroke="#666" stroke-width="1"/><line x1="601.5" y1="459.60" x2="601.5" y2="475.60" stroke="#666" stroke-width="1"/><text x="603.70" y="474.20" font-size="10.1" fill="#737373" font-family="Liberation Sans" textLength="23.3" lengthAdjust="spacingAndGlyphs">11:10</text><line x1="716.5" y1="459.60" x2="716.5" y2="475.60" stroke="#666" stroke-width="1"/><text x="718.70" y="474.20" font-size="10.1" fill="#737373" font-family="Liberation Sans" textLength="23.3" lengthAdjust="spacingAndGlyphs">11:15</text><line x1="832.5" y1="459.60" x2="832.5" y2="475.60" stroke="#666" stroke-width="1"/><text x="834.70" y="474.20" font-size="10.1" fill="#737373" font-family="Liberation Sans" textLength="23.3" lengthAdjust="spacingAndGlyphs">11:20</text><text x="682.15" y="343.60" text-anchor="middle" font-size="9.5" fill="#555" font-family="Liberation Sans" textLength="71" lengthAdjust="spacingAndGlyphs">Memory Used %</text></svg>
<div class="a" style="left:836.9px;top:328.4px;width:28.4px;height:28.4px;border-radius:50%;background:#fff;border:1px solid #e8e8e8;box-shadow:1px 1px 2px rgba(0,0,0,0.12)"></div>
<svg class="a" style="left:844.5px;top:336.6px" width="12" height="12" viewBox="0 0 12 12"><path d="M4.6 1.2 H7.4 V4.8 H9.8 L6 8.2 L2.2 4.8 H4.6 Z" fill="#aaa"/><rect x="2.2" y="9.8" width="7.6" height="1.6" fill="#aaa"/></svg>
<div class="a" style="left:879px;top:321.6px;width:414px;height:165px;background:#fff;border:1px solid #d0d2d5;box-shadow:0 1px 1px rgba(0,0,0,0.10)"></div>
<svg class="a" style="left:0;top:0" width="1310" height="667" viewBox="0 0 1310 667"><line x1="946.5" y1="435.5" x2="1276.7" y2="435.5" stroke="#e6e6e6" stroke-width="1"/><line x1="946.5" y1="411.5" x2="1276.7" y2="411.5" stroke="#e6e6e6" stroke-width="1"/><line x1="946.5" y1="387.5" x2="1276.7" y2="387.5" stroke="#e6e6e6" stroke-width="1"/><line x1="946.5" y1="363.5" x2="1276.7" y2="363.5" stroke="#e6e6e6" stroke-width="1"/><rect x="948.40" y="370.71" width="18.3" height="88.89" fill="#0aa2ca"/><rect x="970.45" y="382.24" width="18.3" height="77.36" fill="#0aa2ca"/><rect x="992.50" y="412.99" width="18.3" height="46.61" fill="#0aa2ca"/><rect x="1014.55" y="370.71" width="18.3" height="88.89" fill="#0aa2ca"/><rect x="1036.60" y="387.52" width="18.3" height="72.08" fill="#0aa2ca"/><rect x="1058.65" y="425.48" width="18.3" height="34.12" fill="#0aa2ca"/><rect x="1080.70" y="429.81" width="18.3" height="29.79" fill="#0aa2ca"/><rect x="1102.75" y="393.77" width="18.3" height="65.83" fill="#0aa2ca"/><rect x="1124.80" y="406.26" width="18.3" height="53.34" fill="#0aa2ca"/><rect x="1146.85" y="426.93" width="18.3" height="32.67" fill="#0aa2ca"/><rect x="1168.90" y="414.91" width="18.3" height="44.69" fill="#0aa2ca"/><rect x="1190.95" y="434.13" width="18.3" height="25.47" fill="#0aa2ca"/><rect x="1213.00" y="391.37" width="18.3" height="68.23" fill="#0aa2ca"/><rect x="1235.05" y="371.19" width="18.3" height="88.41" fill="#0aa2ca"/><rect x="1257.10" y="391.85" width="18.3" height="67.75" fill="#0aa2ca"/><line x1="948.40" y1="435.5" x2="966.70" y2="435.5" stroke="#000" stroke-opacity="0.09" stroke-width="1"/><line x1="970.45" y1="435.5" x2="988.75" y2="435.5" stroke="#000" stroke-opacity="0.09" stroke-width="1"/><line x1="992.50" y1="435.5" x2="1010.80" y2="435.5" stroke="#000" stroke-opacity="0.09" stroke-width="1"/><line x1="1014.55" y1="435.5" x2="1032.85" y2="435.5" stroke="#000" stroke-opacity="0.09" stroke-width="1"/><line x1="1036.60" y1="435.5" x2="1054.90" y2="435.5" stroke="#000" stroke-opacity="0.09" stroke-width="1"/><line x1="1058.65" y1="435.5" x2="1076.95" y2="435.5" stroke="#000" stroke-opacity="0.09" stroke-width="1"/><line x1="1080.70" y1="435.5" x2="1099.00" y2="435.5" stroke="#000" stroke-opacity="0.09" stroke-width="1"/><line x1="1102.75" y1="435.5" x2="1121.05" y2="435.5" stroke="#000" stroke-opacity="0.09" stroke-width="1"/><line x1="1124.80" y1="435.5" x2="1143.10" y2="435.5" stroke="#000" stroke-opacity="0.09" stroke-width="1"/><line x1="1146.85" y1="435.5" x2="1165.15" y2="435.5" stroke="#000" stroke-opacity="0.09" stroke-width="1"/><line x1="1168.90" y1="435.5" x2="1187.20" y2="435.5" stroke="#000" stroke-opacity="0.09" stroke-width="1"/><line x1="1190.95" y1="435.5" x2="1209.25" y2="435.5" stroke="#000" stroke-opacity="0.09" stroke-width="1"/><line x1="1213.00" y1="435.5" x2="1231.30" y2="435.5" stroke="#000" stroke-opacity="0.09" stroke-width="1"/><line x1="1235.05" y1="435.5" x2="1253.35" y2="435.5" stroke="#000" stroke-opacity="0.09" stroke-width="1"/><line x1="1257.10" y1="435.5" x2="1275.40" y2="435.5" stroke="#000" stroke-opacity="0.09" stroke-width="1"/><line x1="948.40" y1="411.5" x2="966.70" y2="411.5" stroke="#000" stroke-opacity="0.09" stroke-width="1"/><line x1="970.45" y1="411.5" x2="988.75" y2="411.5" stroke="#000" stroke-opacity="0.09" stroke-width="1"/><line x1="1014.55" y1="411.5" x2="1032.85" y2="411.5" stroke="#000" stroke-opacity="0.09" stroke-width="1"/><line x1="1036.60" y1="411.5" x2="1054.90" y2="411.5" stroke="#000" stroke-opacity="0.09" stroke-width="1"/><line x1="1102.75" y1="411.5" x2="1121.05" y2="411.5" stroke="#000" stroke-opacity="0.09" stroke-width="1"/><line x1="1124.80" y1="411.5" x2="1143.10" y2="411.5" stroke="#000" stroke-opacity="0.09" stroke-width="1"/><line x1="1213.00" y1="411.5" x2="1231.30" y2="411.5" stroke="#000" stroke-opacity="0.09" stroke-width="1"/><line x1="1235.05" y1="411.5" x2="1253.35" y2="411.5" stroke="#000" stroke-opacity="0.09" stroke-width="1"/><line x1="1257.10" y1="411.5" x2="1275.40" y2="411.5" stroke="#000" stroke-opacity="0.09" stroke-width="1"/><line x1="948.40" y1="387.5" x2="966.70" y2="387.5" stroke="#000" stroke-opacity="0.09" stroke-width="1"/><line x1="970.45" y1="387.5" x2="988.75" y2="387.5" stroke="#000" stroke-opacity="0.09" stroke-width="1"/><line x1="1014.55" y1="387.5" x2="1032.85" y2="387.5" stroke="#000" stroke-opacity="0.09" stroke-width="1"/><line x1="1235.05" y1="387.5" x2="1253.35" y2="387.5" stroke="#000" stroke-opacity="0.09" stroke-width="1"/><line x1="946.5" y1="363.50" x2="946.5" y2="459.60" stroke="#555" stroke-width="1"/><line x1="941.5" y1="459.5" x2="946.5" y2="459.5" stroke="#555" stroke-width="1"/><text x="912.40" y="463.10" font-size="9.8" fill="#6e6e6e" font-family="Liberation Sans" textLength="24.10" lengthAdjust="spacingAndGlyphs">4,400</text><line x1="941.5" y1="435.5" x2="946.5" y2="435.5" stroke="#555" stroke-width="1"/><text x="912.40" y="439.08" font-size="9.8" fill="#6e6e6e" font-family="Liberation Sans" textLength="24.10" lengthAdjust="spacingAndGlyphs">4,450</text><line x1="941.5" y1="411.5" x2="946.5" y2="411.5" stroke="#555" stroke-width="1"/><text x="912.40" y="415.05" font-size="9.8" fill="#6e6e6e" font-family="Liberation Sans" textLength="24.10" lengthAdjust="spacingAndGlyphs">4,500</text><line x1="941.5" y1="387.5" x2="946.5" y2="387.5" stroke="#555" stroke-width="1"/><text x="912.40" y="391.02" font-size="9.8" fill="#6e6e6e" font-family="Liberation Sans" textLength="24.10" lengthAdjust="spacingAndGlyphs">4,550</text><line x1="941.5" y1="363.5" x2="946.5" y2="363.5" stroke="#555" stroke-width="1"/><text x="912.40" y="367.00" font-size="9.8" fill="#6e6e6e" font-family="Liberation Sans" textLength="24.10" lengthAdjust="spacingAndGlyphs">4,600</text><line x1="946.50" y1="459.5" x2="1276.70" y2="459.5" stroke="#666" stroke-width="1"/><line x1="1034.5" y1="459.60" x2="1034.5" y2="475.60" stroke="#666" stroke-width="1"/><text x="1036.70" y="474.20" font-size="10.1" fill="#737373" font-family="Liberation Sans" textLength="23.3" lengthAdjust="spacingAndGlyphs">11:10</text><line x1="1144.5" y1="459.60" x2="1144.5" y2="475.60" stroke="#666" stroke-width="1"/><text x="1146.70" y="474.20" font-size="10.1" fill="#737373" font-family="Liberation Sans" textLength="23.3" lengthAdjust="spacingAndGlyphs">11:15</text><line x1="1254.5" y1="459.60" x2="1254.5" y2="475.60" stroke="#666" stroke-width="1"/><text x="1256.70" y="474.20" font-size="10.1" fill="#737373" font-family="Liberation Sans" textLength="23.3" lengthAdjust="spacingAndGlyphs">11:20</text><text x="1111.60" y="343.60" text-anchor="middle" font-size="9.5" fill="#555" font-family="Liberation Sans" textLength="80.2" lengthAdjust="spacingAndGlyphs">Memory Free (MB)</text><text x="902.00" y="411.55" text-anchor="middle" font-size="10.4" fill="#5a5a5a" stroke="#5a5a5a" stroke-width="0.2" font-family="Liberation Sans" transform="rotate(-90 902.00 411.55)" textLength="80.6" lengthAdjust="spacingAndGlyphs">Memory Free (MB)</text></svg>
<div class="a" style="left:1256.9px;top:328.4px;width:28.4px;height:28.4px;border-radius:50%;background:#fff;border:1px solid #e8e8e8;box-shadow:1px 1px 2px rgba(0,0,0,0.12)"></div>
<svg class="a" style="left:1264.5px;top:336.6px" width="12" height="12" viewBox="0 0 12 12"><path d="M4.6 1.2 H7.4 V4.8 H9.8 L6 8.2 L2.2 4.8 H4.6 Z" fill="#aaa"/><rect x="2.2" y="9.8" width="7.6" height="1.6" fill="#aaa"/></svg>
<div class="a" style="left:43px;top:492.2px;width:414px;height:165px;background:#fff;border:1px solid #d0d2d5;box-shadow:0 1px 1px rgba(0,0,0,0.10)"></div>
<svg class="a" style="left:0;top:0" width="1310" height="667" viewBox="0 0 1310 667"><rect x="90.40" y="628.76" width="19.3" height="1.44" fill="#0aa2ca"/><rect x="113.84" y="628.76" width="19.3" height="1.44" fill="#0aa2ca"/><rect x="137.28" y="628.76" width="19.3" height="1.44" fill="#0aa2ca"/><rect x="160.72" y="628.76" width="19.3" height="1.44" fill="#0aa2ca"/><rect x="184.16" y="628.76" width="19.3" height="1.44" fill="#0aa2ca"/><rect x="207.60" y="628.76" width="19.3" height="1.44" fill="#0aa2ca"/><rect x="231.04" y="628.76" width="19.3" height="1.44" fill="#0aa2ca"/><rect x="254.48" y="628.76" width="19.3" height="1.44" fill="#0aa2ca"/><rect x="277.92" y="628.76" width="19.3" height="1.44" fill="#0aa2ca"/><rect x="301.36" y="628.76" width="19.3" height="1.44" fill="#0aa2ca"/><rect x="324.80" y="628.76" width="19.3" height="1.44" fill="#0aa2ca"/><rect x="348.24" y="628.76" width="19.3" height="1.44" fill="#0aa2ca"/><rect x="371.68" y="627.32" width="19.3" height="2.88" fill="#0aa2ca"/><rect x="395.12" y="627.32" width="19.3" height="2.88" fill="#0aa2ca"/><rect x="418.56" y="627.32" width="19.3" height="2.88" fill="#0aa2ca"/><line x1="88.5" y1="534.10" x2="88.5" y2="630.20" stroke="#c8c8c8" stroke-width="1"/><line x1="83.5" y1="630.5" x2="88.5" y2="630.5" stroke="#c8c8c8" stroke-width="1"/><text x="66.25" y="633.70" font-size="9.8" fill="#6e6e6e" font-family="Liberation Sans" textLength="12.25" lengthAdjust="spacingAndGlyphs">0%</text><line x1="83.5" y1="582.5" x2="88.5" y2="582.5" stroke="#c8c8c8" stroke-width="1"/><text x="60.90" y="585.65" font-size="9.8" fill="#6e6e6e" font-family="Liberation Sans" textLength="17.60" lengthAdjust="spacingAndGlyphs">50%</text><line x1="83.5" y1="534.5" x2="88.5" y2="534.5" stroke="#c8c8c8" stroke-width="1"/><text x="55.55" y="537.60" font-size="9.8" fill="#6e6e6e" font-family="Liberation Sans" textLength="22.95" lengthAdjust="spacingAndGlyphs">100%</text><line x1="88.50" y1="630.5" x2="440.30" y2="630.5" stroke="#666" stroke-width="1"/><line x1="182.5" y1="630.20" x2="182.5" y2="646.20" stroke="#666" stroke-width="1"/><text x="184.70" y="644.80" font-size="10.1" fill="#737373" font-family="Liberation Sans" textLength="23.3" lengthAdjust="spacingAndGlyphs">11:10</text><line x1="298.5" y1="630.20" x2="298.5" y2="646.20" stroke="#666" stroke-width="1"/><text x="300.70" y="644.80" font-size="10.1" fill="#737373" font-family="Liberation Sans" textLength="23.3" lengthAdjust="spacingAndGlyphs">11:15</text><line x1="416.5" y1="630.20" x2="416.5" y2="646.20" stroke="#666" stroke-width="1"/><text x="418.70" y="644.80" font-size="10.1" fill="#737373" font-family="Liberation Sans" textLength="23.3" lengthAdjust="spacingAndGlyphs">11:20</text><text x="264.40" y="514.20" text-anchor="middle" font-size="9.5" fill="#555" font-family="Liberation Sans" textLength="78" lengthAdjust="spacingAndGlyphs">Page File Usage %</text></svg>
<div class="a" style="left:420.9px;top:499.0px;width:28.4px;height:28.4px;border-radius:50%;background:#fff;border:1px solid #e8e8e8;box-shadow:1px 1px 2px rgba(0,0,0,0.12)"></div>
<svg class="a" style="left:428.5px;top:507.2px" width="12" height="12" viewBox="0 0 12 12"><path d="M4.6 1.2 H7.4 V4.8 H9.8 L6 8.2 L2.2 4.8 H4.6 Z" fill="#aaa"/><rect x="2.2" y="9.8" width="7.6" height="1.6" fill="#aaa"/></svg>
<div class="a" style="left:463px;top:492.2px;width:410px;height:165px;background:#fff;border:1px solid #d0d2d5;box-shadow:0 1px 1px rgba(0,0,0,0.10)"></div>
<svg class="a" style="left:0;top:0" width="1310" height="667" viewBox="0 0 1310 667"><line x1="519.6" y1="598.5" x2="856.3" y2="598.5" stroke="#e6e6e6" stroke-width="1"/><line x1="519.6" y1="566.5" x2="856.3" y2="566.5" stroke="#e6e6e6" stroke-width="1"/><line x1="519.6" y1="534.5" x2="856.3" y2="534.5" stroke="#e6e6e6" stroke-width="1"/><rect x="522.00" y="594.96" width="18.4" height="35.24" fill="#0aa2ca"/><rect x="544.45" y="594.32" width="18.4" height="35.88" fill="#0aa2ca"/><rect x="566.90" y="553.64" width="18.4" height="76.56" fill="#0aa2ca"/><rect x="589.35" y="592.72" width="18.4" height="37.48" fill="#0aa2ca"/><rect x="611.80" y="581.19" width="18.4" height="49.01" fill="#0aa2ca"/><rect x="634.25" y="599.70" width="18.4" height="30.50" fill="#0aa2ca"/><rect x="656.70" y="570.87" width="18.4" height="59.33" fill="#0aa2ca"/><rect x="679.15" y="589.65" width="18.4" height="40.55" fill="#0aa2ca"/><rect x="701.60" y="592.79" width="18.4" height="37.41" fill="#0aa2ca"/><rect x="724.05" y="592.79" width="18.4" height="37.41" fill="#0aa2ca"/><rect x="746.50" y="580.36" width="18.4" height="49.84" fill="#0aa2ca"/><rect x="768.95" y="582.66" width="18.4" height="47.54" fill="#0aa2ca"/><rect x="791.40" y="589.65" width="18.4" height="40.55" fill="#0aa2ca"/><rect x="813.85" y="593.68" width="18.4" height="36.52" fill="#0aa2ca"/><rect x="836.30" y="594.96" width="18.4" height="35.24" fill="#0aa2ca"/><line x1="522.00" y1="598.5" x2="540.40" y2="598.5" stroke="#000" stroke-opacity="0.09" stroke-width="1"/><line x1="544.45" y1="598.5" x2="562.85" y2="598.5" stroke="#000" stroke-opacity="0.09" stroke-width="1"/><line x1="566.90" y1="598.5" x2="585.30" y2="598.5" stroke="#000" stroke-opacity="0.09" stroke-width="1"/><line x1="589.35" y1="598.5" x2="607.75" y2="598.5" stroke="#000" stroke-opacity="0.09" stroke-width="1"/><line x1="611.80" y1="598.5" x2="630.20" y2="598.5" stroke="#000" stroke-opacity="0.09" stroke-width="1"/><line x1="656.70" y1="598.5" x2="675.10" y2="598.5" stroke="#000" stroke-opacity="0.09" stroke-width="1"/><line x1="679.15" y1="598.5" x2="697.55" y2="598.5" stroke="#000" stroke-opacity="0.09" stroke-width="1"/><line x1="701.60" y1="598.5" x2="720.00" y2="598.5" stroke="#000" stroke-opacity="0.09" stroke-width="1"/><line x1="724.05" y1="598.5" x2="742.45" y2="598.5" stroke="#000" stroke-opacity="0.09" stroke-width="1"/><line x1="746.50" y1="598.5" x2="764.90" y2="598.5" stroke="#000" stroke-opacity="0.09" stroke-width="1"/><line x1="768.95" y1="598.5" x2="787.35" y2="598.5" stroke="#000" stroke-opacity="0.09" stroke-width="1"/><line x1="791.40" y1="598.5" x2="809.80" y2="598.5" stroke="#000" stroke-opacity="0.09" stroke-width="1"/><line x1="813.85" y1="598.5" x2="832.25" y2="598.5" stroke="#000" stroke-opacity="0.09" stroke-width="1"/><line x1="836.30" y1="598.5" x2="854.70" y2="598.5" stroke="#000" stroke-opacity="0.09" stroke-width="1"/><line x1="566.90" y1="566.5" x2="585.30" y2="566.5" stroke="#000" stroke-opacity="0.09" stroke-width="1"/><line x1="519.5" y1="534.10" x2="519.5" y2="630.20" stroke="#555" stroke-width="1"/><line x1="514.5" y1="630.5" x2="519.5" y2="630.5" stroke="#555" stroke-width="1"/><text x="504.25" y="633.70" font-size="9.8" fill="#6e6e6e" font-family="Liberation Sans" textLength="5.35" lengthAdjust="spacingAndGlyphs">0</text><line x1="514.5" y1="598.5" x2="519.5" y2="598.5" stroke="#555" stroke-width="1"/><text x="498.90" y="601.67" font-size="9.8" fill="#6e6e6e" font-family="Liberation Sans" textLength="10.70" lengthAdjust="spacingAndGlyphs">50</text><line x1="514.5" y1="566.5" x2="519.5" y2="566.5" stroke="#555" stroke-width="1"/><text x="493.55" y="569.63" font-size="9.8" fill="#6e6e6e" font-family="Liberation Sans" textLength="16.05" lengthAdjust="spacingAndGlyphs">100</text><line x1="514.5" y1="534.5" x2="519.5" y2="534.5" stroke="#555" stroke-width="1"/><text x="493.55" y="537.60" font-size="9.8" fill="#6e6e6e" font-family="Liberation Sans" textLength="16.05" lengthAdjust="spacingAndGlyphs">150</text><line x1="519.60" y1="630.5" x2="856.30" y2="630.5" stroke="#666" stroke-width="1"/><line x1="609.5" y1="630.20" x2="609.5" y2="646.20" stroke="#666" stroke-width="1"/><text x="611.70" y="644.80" font-size="10.1" fill="#737373" font-family="Liberation Sans" textLength="23.3" lengthAdjust="spacingAndGlyphs">11:10</text><line x1="721.5" y1="630.20" x2="721.5" y2="646.20" stroke="#666" stroke-width="1"/><text x="723.70" y="644.80" font-size="10.1" fill="#737373" font-family="Liberation Sans" textLength="23.3" lengthAdjust="spacingAndGlyphs">11:15</text><line x1="833.5" y1="630.20" x2="833.5" y2="646.20" stroke="#666" stroke-width="1"/><text x="835.70" y="644.80" font-size="10.1" fill="#737373" font-family="Liberation Sans" textLength="23.3" lengthAdjust="spacingAndGlyphs">11:20</text><text x="687.95" y="514.20" text-anchor="middle" font-size="9.5" fill="#555" font-family="Liberation Sans" textLength="78.8" lengthAdjust="spacingAndGlyphs">Disk Transfers/sec</text><text x="486.00" y="582.15" text-anchor="middle" font-size="10.4" fill="#5a5a5a" stroke="#5a5a5a" stroke-width="0.2" font-family="Liberation Sans" transform="rotate(-90 486.00 582.15)" textLength="79.6" lengthAdjust="spacingAndGlyphs">Disk Transfers/sec</text></svg>
<div class="a" style="left:836.9px;top:499.0px;width:28.4px;height:28.4px;border-radius:50%;background:#fff;border:1px solid #e8e8e8;box-shadow:1px 1px 2px rgba(0,0,0,0.12)"></div>
<svg class="a" style="left:844.5px;top:507.2px" width="12" height="12" viewBox="0 0 12 12"><path d="M4.6 1.2 H7.4 V4.8 H9.8 L6 8.2 L2.2 4.8 H4.6 Z" fill="#aaa"/><rect x="2.2" y="9.8" width="7.6" height="1.6" fill="#aaa"/></svg>
<div class="a" style="left:879px;top:492.2px;width:414px;height:165px;background:#fff;border:1px solid #d0d2d5;box-shadow:0 1px 1px rgba(0,0,0,0.10)"></div>
<svg class="a" style="left:0;top:0" width="1310" height="667" viewBox="0 0 1310 667"><line x1="951.5" y1="606.5" x2="1276.7" y2="606.5" stroke="#e6e6e6" stroke-width="1"/><line x1="951.5" y1="582.5" x2="1276.7" y2="582.5" stroke="#e6e6e6" stroke-width="1"/><line x1="951.5" y1="558.5" x2="1276.7" y2="558.5" stroke="#e6e6e6" stroke-width="1"/><line x1="951.5" y1="534.5" x2="1276.7" y2="534.5" stroke="#e6e6e6" stroke-width="1"/><rect x="953.70" y="616.75" width="17.6" height="13.45" fill="#0aa2ca"/><rect x="975.37" y="570.62" width="17.6" height="59.58" fill="#0aa2ca"/><rect x="997.04" y="618.55" width="17.6" height="11.65" fill="#0aa2ca"/><rect x="1018.71" y="578.31" width="17.6" height="51.89" fill="#0aa2ca"/><rect x="1040.38" y="610.74" width="17.6" height="19.46" fill="#0aa2ca"/><rect x="1062.05" y="617.71" width="17.6" height="12.49" fill="#0aa2ca"/><rect x="1083.72" y="603.53" width="17.6" height="26.67" fill="#0aa2ca"/><rect x="1105.39" y="602.81" width="17.6" height="27.39" fill="#0aa2ca"/><rect x="1127.06" y="544.55" width="17.6" height="85.65" fill="#0aa2ca"/><rect x="1148.73" y="594.64" width="17.6" height="35.56" fill="#0aa2ca"/><rect x="1170.40" y="591.28" width="17.6" height="38.92" fill="#0aa2ca"/><rect x="1192.07" y="617.71" width="17.6" height="12.49" fill="#0aa2ca"/><rect x="1213.74" y="618.55" width="17.6" height="11.65" fill="#0aa2ca"/><rect x="1235.41" y="566.89" width="17.6" height="63.31" fill="#0aa2ca"/><rect x="1257.08" y="596.93" width="17.6" height="33.27" fill="#0aa2ca"/><line x1="975.37" y1="606.5" x2="992.97" y2="606.5" stroke="#000" stroke-opacity="0.09" stroke-width="1"/><line x1="1018.71" y1="606.5" x2="1036.31" y2="606.5" stroke="#000" stroke-opacity="0.09" stroke-width="1"/><line x1="1083.72" y1="606.5" x2="1101.32" y2="606.5" stroke="#000" stroke-opacity="0.09" stroke-width="1"/><line x1="1105.39" y1="606.5" x2="1122.99" y2="606.5" stroke="#000" stroke-opacity="0.09" stroke-width="1"/><line x1="1127.06" y1="606.5" x2="1144.66" y2="606.5" stroke="#000" stroke-opacity="0.09" stroke-width="1"/><line x1="1148.73" y1="606.5" x2="1166.33" y2="606.5" stroke="#000" stroke-opacity="0.09" stroke-width="1"/><line x1="1170.40" y1="606.5" x2="1188.00" y2="606.5" stroke="#000" stroke-opacity="0.09" stroke-width="1"/><line x1="1235.41" y1="606.5" x2="1253.01" y2="606.5" stroke="#000" stroke-opacity="0.09" stroke-width="1"/><line x1="1257.08" y1="606.5" x2="1274.68" y2="606.5" stroke="#000" stroke-opacity="0.09" stroke-width="1"/><line x1="975.37" y1="582.5" x2="992.97" y2="582.5" stroke="#000" stroke-opacity="0.09" stroke-width="1"/><line x1="1018.71" y1="582.5" x2="1036.31" y2="582.5" stroke="#000" stroke-opacity="0.09" stroke-width="1"/><line x1="1127.06" y1="582.5" x2="1144.66" y2="582.5" stroke="#000" stroke-opacity="0.09" stroke-width="1"/><line x1="1235.41" y1="582.5" x2="1253.01" y2="582.5" stroke="#000" stroke-opacity="0.09" stroke-width="1"/><line x1="1127.06" y1="558.5" x2="1144.66" y2="558.5" stroke="#000" stroke-opacity="0.09" stroke-width="1"/><line x1="951.5" y1="534.10" x2="951.5" y2="630.20" stroke="#555" stroke-width="1"/><line x1="946.5" y1="630.5" x2="951.5" y2="630.5" stroke="#555" stroke-width="1"/><text x="936.15" y="633.70" font-size="9.8" fill="#6e6e6e" font-family="Liberation Sans" textLength="5.35" lengthAdjust="spacingAndGlyphs">0</text><line x1="946.5" y1="606.5" x2="951.5" y2="606.5" stroke="#555" stroke-width="1"/><text x="912.05" y="609.68" font-size="9.8" fill="#6e6e6e" font-family="Liberation Sans" textLength="29.45" lengthAdjust="spacingAndGlyphs">20,000</text><line x1="946.5" y1="582.5" x2="951.5" y2="582.5" stroke="#555" stroke-width="1"/><text x="912.05" y="585.65" font-size="9.8" fill="#6e6e6e" font-family="Liberation Sans" textLength="29.45" lengthAdjust="spacingAndGlyphs">40,000</text><line x1="946.5" y1="558.5" x2="951.5" y2="558.5" stroke="#555" stroke-width="1"/><text x="912.05" y="561.62" font-size="9.8" fill="#6e6e6e" font-family="Liberation Sans" textLength="29.45" lengthAdjust="spacingAndGlyphs">60,000</text><line x1="946.5" y1="534.5" x2="951.5" y2="534.5" stroke="#555" stroke-width="1"/><text x="912.05" y="537.60" font-size="9.8" fill="#6e6e6e" font-family="Liberation Sans" textLength="29.45" lengthAdjust="spacingAndGlyphs">80,000</text><line x1="951.50" y1="630.5" x2="1276.70" y2="630.5" stroke="#666" stroke-width="1"/><line x1="1038.5" y1="630.20" x2="1038.5" y2="646.20" stroke="#666" stroke-width="1"/><text x="1040.70" y="644.80" font-size="10.1" fill="#737373" font-family="Liberation Sans" textLength="23.3" lengthAdjust="spacingAndGlyphs">11:10</text><line x1="1147.5" y1="630.20" x2="1147.5" y2="646.20" stroke="#666" stroke-width="1"/><text x="1149.70" y="644.80" font-size="10.1" fill="#737373" font-family="Liberation Sans" textLength="23.3" lengthAdjust="spacingAndGlyphs">11:15</text><line x1="1254.5" y1="630.20" x2="1254.5" y2="646.20" stroke="#666" stroke-width="1"/><text x="1256.70" y="644.80" font-size="10.1" fill="#737373" font-family="Liberation Sans" textLength="23.3" lengthAdjust="spacingAndGlyphs">11:20</text><text x="1114.10" y="514.20" text-anchor="middle" font-size="9.5" fill="#555" font-family="Liberation Sans" textLength="114" lengthAdjust="spacingAndGlyphs">Context Switches (per sec)</text><text x="902.00" y="582.15" text-anchor="middle" font-size="10.4" fill="#5a5a5a" stroke="#5a5a5a" stroke-width="0.2" font-family="Liberation Sans" transform="rotate(-90 902.00 582.15)" textLength="114.7" lengthAdjust="spacingAndGlyphs">Context Switches (per sec)</text></svg>
<div class="a" style="left:1256.9px;top:499.0px;width:28.4px;height:28.4px;border-radius:50%;background:#fff;border:1px solid #e8e8e8;box-shadow:1px 1px 2px rgba(0,0,0,0.12)"></div>
<svg class="a" style="left:1264.5px;top:507.2px" width="12" height="12" viewBox="0 0 12 12"><path d="M4.6 1.2 H7.4 V4.8 H9.8 L6 8.2 L2.2 4.8 H4.6 Z" fill="#aaa"/><rect x="2.2" y="9.8" width="7.6" height="1.6" fill="#aaa"/></svg>
<div class="a" style="left:43px;top:662.8px;width:414px;height:165px;background:#fff;border:1px solid #d0d2d5;box-shadow:0 1px 1px rgba(0,0,0,0.10)"></div>
<div class="a" style="left:463px;top:662.8px;width:410px;height:165px;background:#fff;border:1px solid #d0d2d5;box-shadow:0 1px 1px rgba(0,0,0,0.10)"></div>
<div class="a" style="left:879px;top:662.8px;width:414px;height:165px;background:#fff;border:1px solid #d0d2d5;box-shadow:0 1px 1px rgba(0,0,0,0.10)"></div>
<div class="a" style="left:1293px;top:148px;width:13.3px;height:519px;background:#f1f1f1"></div>
<svg class="a" style="left:1296px;top:148px" width="9" height="7" viewBox="0 0 9 7"><path d="M0.9 5.9 L3.6 2.2 L6.4 5.9 Z" fill="#a3a3a3"/></svg>
<div class="a" style="left:1294.5px;top:158px;width:10.2px;height:315px;background:#c1c1c1"></div></body></html>
